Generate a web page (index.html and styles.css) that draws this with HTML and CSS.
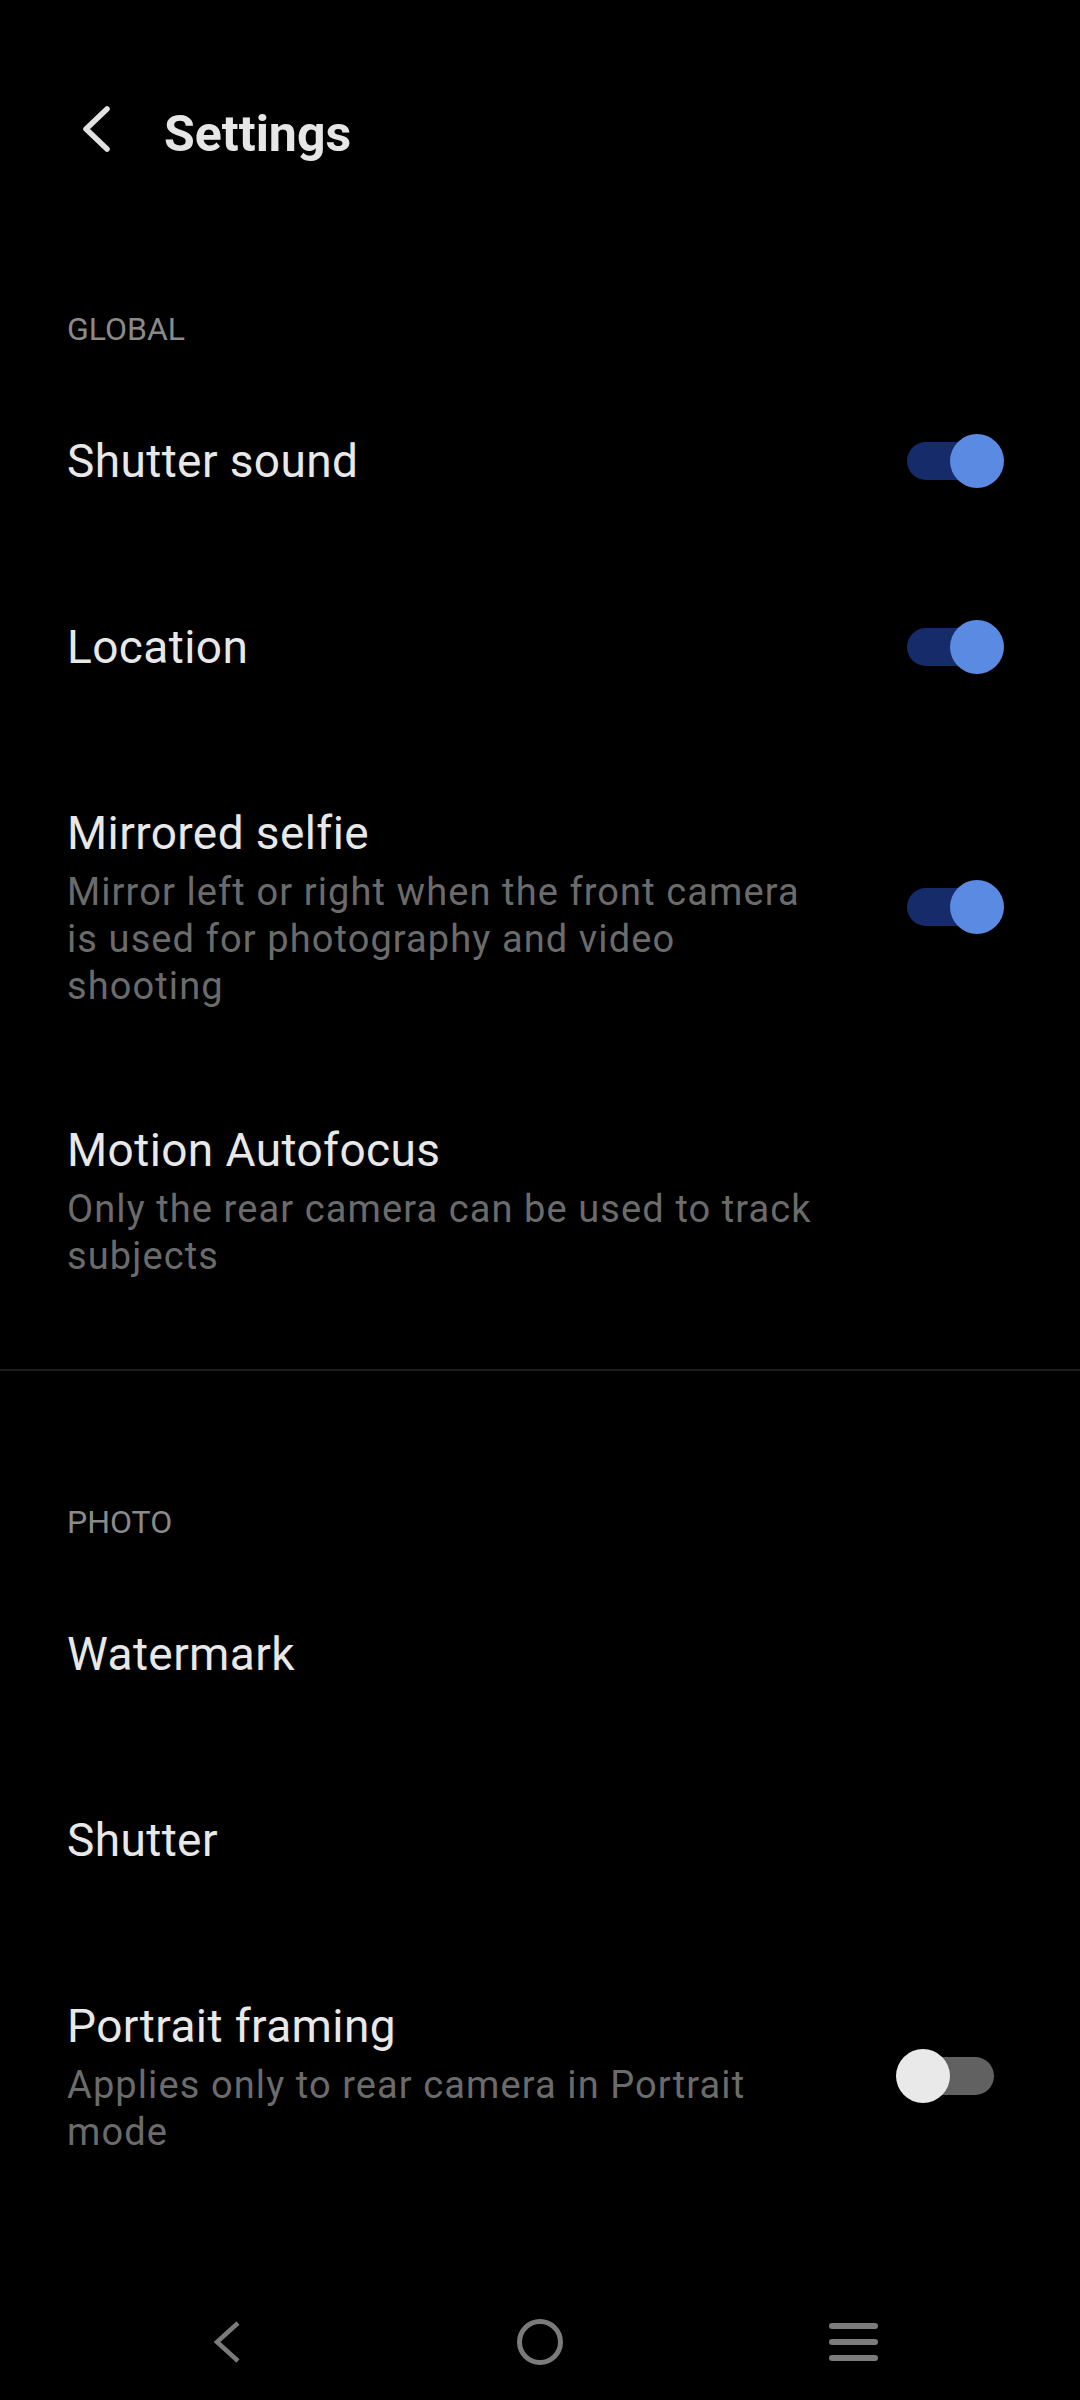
FILE: index.html
```html
<!DOCTYPE html>
<html lang="en">
<head>
<meta charset="utf-8">
<title>Settings</title>
<link rel="stylesheet" href="styles.css">
</head>
<body>
<div class="page">
  <header class="appbar">
    <svg class="appbar-back" width="28" height="46" viewBox="0 0 28 46"><path d="M25 3 L4 23 L25 43" fill="none" stroke="#e2e2e2" stroke-width="5.5" stroke-linecap="round" stroke-linejoin="round"/></svg>
    <h1 class="appbar-title">Settings</h1>
  </header>

  <section class="group group-global">
    <div class="group-title">GLOBAL</div>
    <div class="row">
      <div class="row-text"><div class="row-title">Shutter sound</div></div>
      <div class="switch on"><span class="track"></span><span class="knob"></span></div>
    </div>
    <div class="row">
      <div class="row-text"><div class="row-title">Location</div></div>
      <div class="switch on"><span class="track"></span><span class="knob"></span></div>
    </div>
    <div class="row has-desc">
      <div class="row-text">
        <div class="row-title">Mirrored selfie</div>
        <div class="row-desc">Mirror left or right when the front camera is used for photography and video shooting</div>
      </div>
      <div class="switch on"><span class="track"></span><span class="knob"></span></div>
    </div>
    <div class="row has-desc">
      <div class="row-text">
        <div class="row-title">Motion Autofocus</div>
        <div class="row-desc">Only the rear camera can be used to track subjects</div>
      </div>
      <div class="switch-space"></div>
    </div>
  </section>

  <div class="divider"></div>

  <section class="group group-photo">
    <div class="group-title">PHOTO</div>
    <div class="row">
      <div class="row-text"><div class="row-title">Watermark</div></div>
    </div>
    <div class="row">
      <div class="row-text"><div class="row-title">Shutter</div></div>
    </div>
    <div class="row has-desc">
      <div class="row-text">
        <div class="row-title">Portrait framing</div>
        <div class="row-desc">Applies only to rear camera in Portrait mode</div>
      </div>
      <div class="switch off"><span class="track"></span><span class="knob"></span></div>
    </div>
  </section>

  <nav class="navbar">
    <div class="nav-cell">
      <svg width="30" height="44" viewBox="0 0 30 44"><path d="M26 3 L5 22 L26 41" fill="none" stroke="#7b7b7b" stroke-width="4.5" stroke-linecap="butt" stroke-linejoin="miter"/></svg>
    </div>
    <div class="nav-cell">
      <svg width="48" height="48" viewBox="0 0 48 48"><circle cx="24" cy="24" r="20.5" fill="none" stroke="#7b7b7b" stroke-width="5"/></svg>
    </div>
    <div class="nav-cell">
      <div class="menu-icon"><span></span><span></span><span></span></div>
    </div>
  </nav>
</div>
</body>
</html>
```
FILE: styles.css
```css
* { box-sizing: border-box; }
html, body {
  margin: 0;
  padding: 0;
  background: #000;
}
body {
  font-family: Roboto, "Noto Sans", "Liberation Sans", sans-serif;
  color: #e8e8e8;
}
.page {
  width: 1080px;
  min-height: 2400px;
  display: flex;
  flex-direction: column;
  background: #000;
}
.appbar {
  display: flex;
  align-items: flex-start;
  padding: 99px 0 0 82px;
  height: 169px;
}
.appbar-back {
  margin-top: 7px;
  flex: none;
}
.appbar-title {
  margin: 0 0 0 54px;
  font-size: 50px;
  line-height: 70px;
  font-weight: 700;
  color: #e6e6e6;
}
.group-global { padding-top: 140px; }
.group-photo { padding-top: 131px; }
.group-title {
  padding-left: 67px;
  font-size: 32px;
  line-height: 40px;
  color: #8a8a8a;
  margin-bottom: 19px;
}
.row {
  display: flex;
  align-items: center;
  padding: 63px 76px 63px 67px;
}
.row.has-desc { padding-bottom: 47px; }
.row-text {
  flex: 1;
  min-width: 0;
  padding-right: 66px;
}
.row-title {
  font-size: 46px;
  line-height: 60px;
  letter-spacing: 0.4px;
  color: #e8e8e8;
}
.row-desc {
  margin-top: 6px;
  font-size: 38px;
  line-height: 47px;
  letter-spacing: 1.1px;
  color: #6b6b6b;
}
.switch {
  position: relative;
  flex: none;
  width: 108px;
  height: 54px;
}
.switch-space {
  flex: none;
  width: 108px;
}
.switch .track {
  position: absolute;
  left: 11px;
  right: 10px;
  top: 8px;
  height: 38px;
  border-radius: 19px;
}
.switch .knob {
  position: absolute;
  top: 0;
  width: 54px;
  height: 54px;
  border-radius: 50%;
}
.switch.on .track { background: #162b6a; }
.switch.on .knob { right: 0; background: #5b8ae2; }
.switch.off .track { background: #616161; }
.switch.off .knob { left: 0; background: #e9e9e9; }
.divider {
  margin-top: 42px;
  height: 2px;
  background: #1c1c1c;
}
.navbar {
  margin-top: auto;
  height: 116px;
  display: flex;
  justify-content: center;
  align-items: center;
}
.nav-cell {
  width: 313px;
  display: flex;
  justify-content: center;
  align-items: center;
}
.menu-icon {
  width: 49px;
  display: flex;
  flex-direction: column;
  gap: 10px;
}
.menu-icon span {
  display: block;
  height: 6px;
  border-radius: 3px;
  background: #7b7b7b;
}
```
